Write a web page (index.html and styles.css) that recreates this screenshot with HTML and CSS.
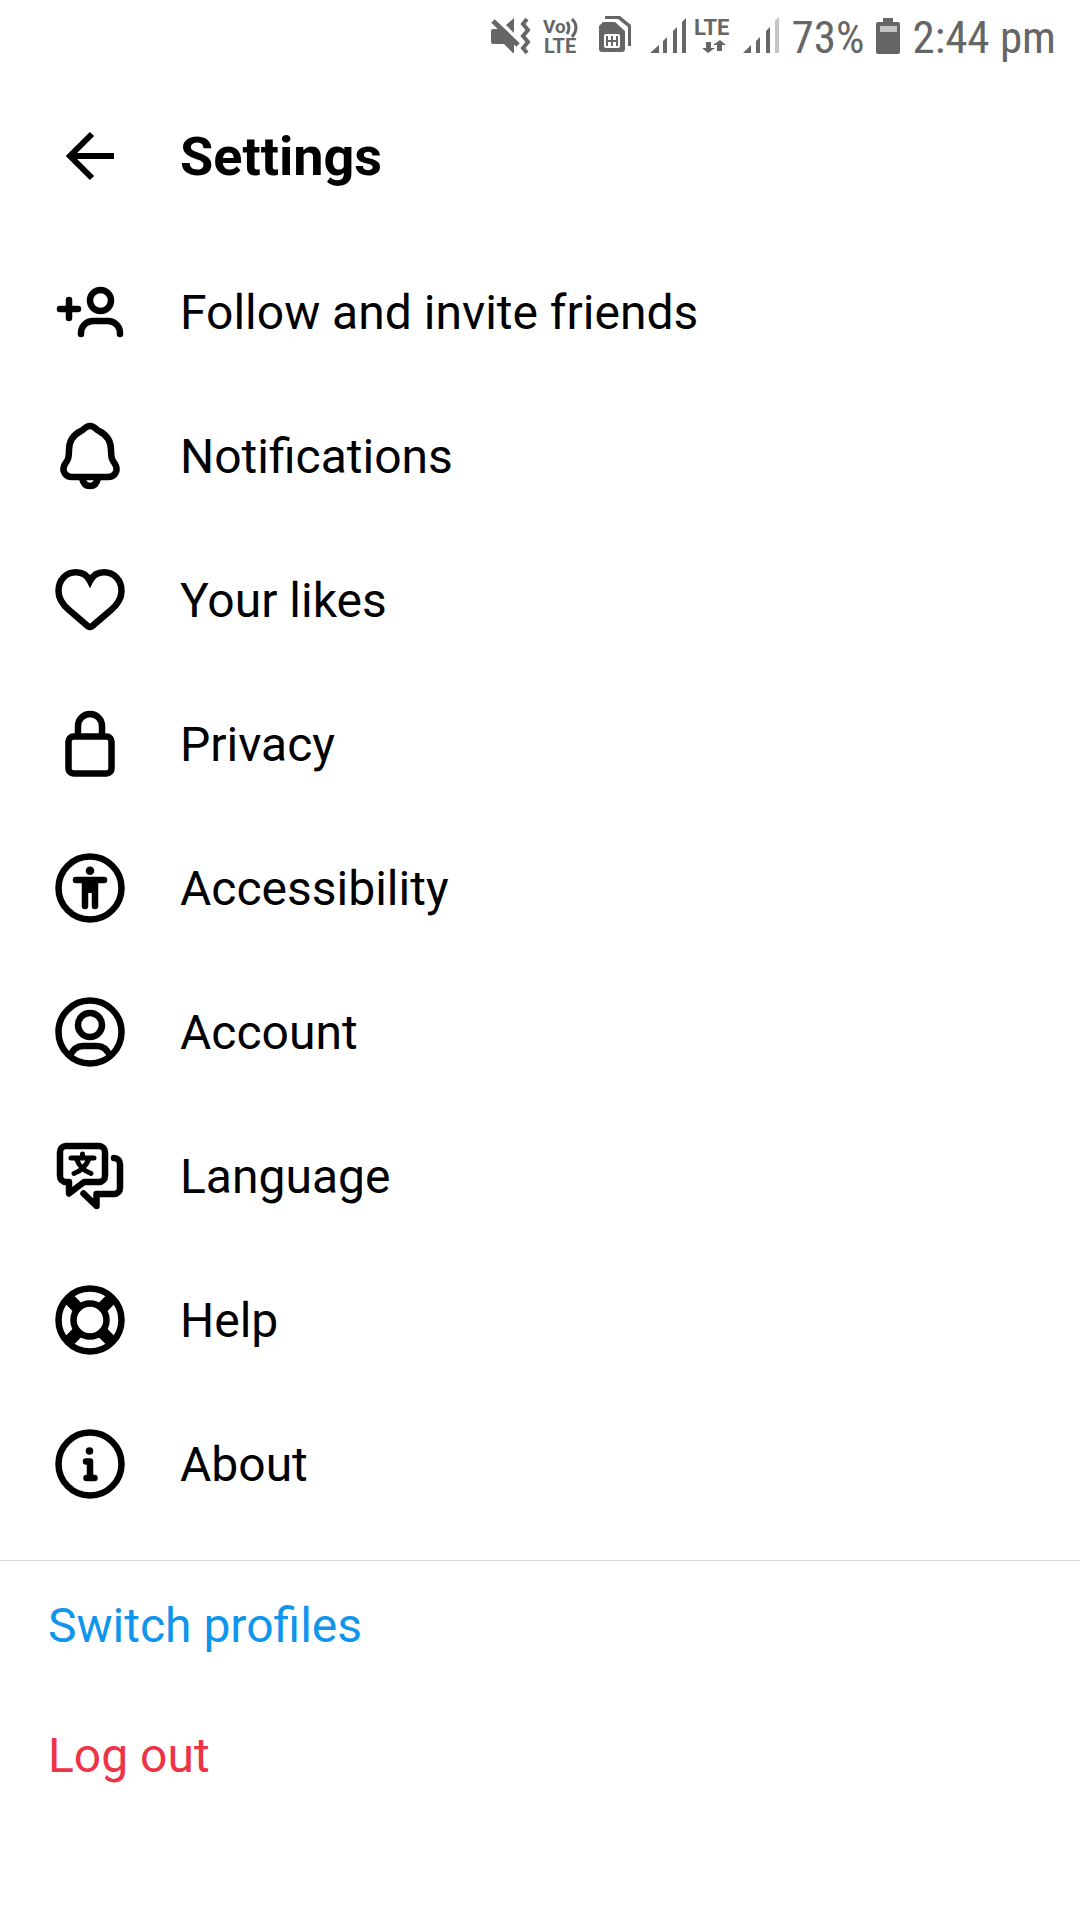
FILE: index.html
```html
<!DOCTYPE html>
<html lang="en">
<head>
<meta charset="utf-8">
<meta name="viewport" content="width=device-width, initial-scale=1">
<title>Settings</title>
<link rel="stylesheet" href="styles.css">
</head>
<body>
<div class="status-bar">
  <svg class="status-icon" width="48" height="40" viewBox="0 0 48 40" role="img" aria-label="Vibrate">
    <path d="M5 15q0-2 2-2h9l12 13v11h-1l-9-9H7q-2 0-2-2zM20 9l8-7v15z" fill="currentColor"/>
    <path d="M9 2l25 24" stroke="#fff" stroke-width="3"/>
    <path d="M7 5l25 24" stroke="currentColor" stroke-width="5"/>
    <path d="M41 3l-4 5 5 6-5 6 5 6-5 6 4 5" fill="none" stroke="currentColor" stroke-width="4"/>
  </svg>
  <svg class="status-icon" width="44" height="40" viewBox="0 0 44 40" role="img" aria-label="VoLTE">
    <text class="badge-text"><tspan x="1" y="17" font-size="19">Vo</tspan><tspan x="2" y="37" font-size="20">LTE</tspan></text>
    <path d="M25 6q4 5 0 12M30 3q8 8 0 18" fill="none" stroke="currentColor" stroke-width="3"/>
  </svg>
  <svg class="status-icon" width="48" height="40" viewBox="0 0 48 40" role="img" aria-label="SIM cards">
    <path d="M11 3V0h15L37 9v21h-3V11L24 3z" fill="currentColor"/>
    <path d="M9 6h12l10 9v18q0 3-3 3H8q-3 0-3-3V10z" fill="currentColor"/>
    <rect x="10" y="18" width="16" height="14" rx="2" fill="#fff"/>
    <path d="M13 20v10M18 20v10M23 20v10M13 25h10" stroke="currentColor" stroke-width="2"/>
  </svg>
  <svg class="status-icon" width="38" height="40" viewBox="0 0 38 40" role="img" aria-label="Signal, SIM 1">
    <path d="M0 37l9-8v8zM13 37V25l4-4v16zM23 37V15l4-4v26zM32 37V6l4-4v35z" fill="currentColor"/>
  </svg>
  <svg class="status-icon" width="38" height="40" viewBox="0 0 38 40" role="img" aria-label="LTE data">
    <text class="badge-text" x="-2" y="19" font-size="22">LTE</text>
    <path d="M10 26h5v6h4l-7 5-6-5h4zM21 35v-6h-4l7-5 6 5h-4v6z" fill="currentColor"/>
  </svg>
  <svg class="status-icon" width="38" height="40" viewBox="0 0 38 40" role="img" aria-label="Signal, SIM 2">
    <path d="M1 37l8-8v8zM14 37V25l4-4v16zM24 37V15l4-4v26z" fill="currentColor"/>
    <path d="M33 37V5l4-4v36z" fill="#c4c4c4"/>
  </svg>
  <span class="status-text battery-level">73%</span>
  <svg class="status-icon" width="32" height="40" viewBox="0 0 32 40" role="img" aria-label="Battery">
    <path d="M11 2h10v4h5q2 0 2 2v28q0 2-2 2H6q-2 0-2-2V8q0-2 2-2h5z" fill="currentColor"/>
    <path d="M8 10h17v6H8z" fill="#c4c4c4"/>
  </svg>
  <span class="status-text">2:44 pm</span>
</div>

<header class="app-bar">
  <button class="back-button" type="button" aria-label="Back">
    <svg class="icon arrow" viewBox="0 0 72 72"><path d="M38 14L16 36l22 22M16 36h44"/></svg>
  </button>
  <h1 class="title">Settings</h1>
</header>

<main>
  <nav class="menu" aria-label="Settings">
    <a class="menu-item" href="#follow">
      <svg class="icon round" viewBox="0 0 72 72"><path d="M6 33h18M15 24v18M27 58v-1a12 12 0 0 1 12-12h15a12 12 0 0 1 12 12v1"/><circle cx="46.5" cy="24.5" r="10.5"/></svg>
      <span class="label">Follow and invite friends</span>
    </a>
    <a class="menu-item" href="#notifications">
      <svg class="icon round" viewBox="0 0 72 72"><path d="M36 6C31 6 30 10 27 11C19 15 15 22 15 30C15 41 13 40 10 46C8 52 12 57 18 57H54C60 57 64 52 62 46C59 40 57 41 57 30C57 22 53 15 45 11C42 10 41 6 36 6ZM28 58C29 63 32 66 36 66S43 63 44 58"/></svg>
      <span class="label">Notifications</span>
    </a>
    <a class="menu-item" href="#likes">
      <svg class="icon" viewBox="0 0 72 72"><path d="M36 17C33 11 28 8.3 22 8.3C12 8.3 4.5 16 4.5 27C4.5 35 9 41 15 46L34 62.3Q36 63.6 38 62.3L57 46C63 41 67.5 35 67.5 27C67.5 16 60 8.3 50 8.3C44 8.3 39 11 36 17Z"/></svg>
      <span class="label">Your likes</span>
    </a>
    <a class="menu-item" href="#privacy">
      <svg class="icon" viewBox="0 0 72 72"><rect x="14.5" y="28.5" width="43" height="37" rx="5"/><path d="M24 28V18a12 12 0 0 1 24 0v10"/></svg>
      <span class="label">Privacy</span>
    </a>
    <a class="menu-item" href="#accessibility">
      <svg class="icon round" viewBox="0 0 72 72"><circle cx="36" cy="36" r="31.5"/><circle class="solid" cx="36" cy="18.7" r="4.3"/><path d="M22 28h28M31 30v24M41 30v24"/><path class="solid" d="M28 28h16v13H28z"/></svg>
      <span class="label">Accessibility</span>
    </a>
    <a class="menu-item" href="#account">
      <svg class="icon round" viewBox="0 0 72 72"><circle cx="36" cy="36" r="31.5"/><circle cx="36" cy="29" r="12"/><path d="M16 60C19 53 23 50 29 50H43C49 50 53 53 56 60"/></svg>
      <span class="label">Account</span>
    </a>
    <a class="menu-item" href="#language">
      <svg class="icon round" viewBox="0 0 72 72"><path d="M12 6h33a6 6 0 0 1 6 6v24a6 6 0 0 1-6 6H30L15 53.5V42h-3a6 6 0 0 1-6-6V12a6 6 0 0 1 6-6zM60 18a6 6 0 0 1 6 6v24a6 6 0 0 1-6 6H42.5v12L29.5 53.5"/><path class="thin" d="M17 18h23M28.5 14v4M22.500 19C25 26 30 31 37 33.500M35 19C32 26 27 31 20 33.500"/></svg>
      <span class="label">Language</span>
    </a>
    <a class="menu-item" href="#help">
      <svg class="icon" viewBox="0 0 72 72"><circle cx="36" cy="36" r="31.5"/><circle cx="36" cy="36" r="16.5"/><path class="spokes" d="M15 15l10 10M57 15L47 25M15 57l10-10M57 57L47 47"/></svg>
      <span class="label">Help</span>
    </a>
    <a class="menu-item" href="#about">
      <svg class="icon round" viewBox="0 0 72 72"><circle cx="36" cy="36" r="31.5"/><circle class="solid" cx="35.5" cy="23" r="3.8"/><path d="M32 33.500H36V50M32.500 50h8"/></svg>
      <span class="label">About</span>
    </a>
  </nav>
  <div class="account-actions">
    <button class="action switch" type="button">Switch profiles</button>
    <button class="action logout" type="button">Log out</button>
  </div>
</main>
</body>
</html>
```

FILE: styles.css
```css
* {
  box-sizing: border-box;
}

body {
  margin: 0;
  background: #fff;
  color: #000;
  font-family: Roboto, sans-serif;
  font-size: 48px;
  line-height: 60px;
}

.status-bar {
  display: flex;
  align-items: center;
  justify-content: flex-end;
  gap: 8px;
  height: 72px;
  padding-right: 24px;
  color: #666;
}

.status-icon {
  flex: none;
  overflow: visible;
}

.badge-text {
  font-weight: 700;
  fill: currentColor;
}

.status-text {
  padding-top: 4px;
  font-family: "Roboto Condensed", "Liberation Sans Narrow", Roboto, sans-serif;
  font-size: 45px;
  white-space: nowrap;
}

.battery-level {
  margin-left: 4px;
}

.app-bar {
  display: flex;
  align-items: center;
  gap: 54px;
  height: 168px;
  padding: 0 54px;
}

.back-button {
  padding: 0;
  border: 0;
  background: none;
  color: inherit;
}

.title {
  margin: 0;
  padding-top: 2px;
  font-size: 54px;
  font-weight: 700;
}

.icon {
  display: block;
  flex: none;
  width: 72px;
  height: 72px;
  fill: none;
  stroke: currentColor;
  stroke-width: 6.5;
}

.arrow {
  stroke-width: 6;
}

.round {
  stroke-linecap: round;
  stroke-linejoin: round;
}

.solid {
  fill: currentColor;
  stroke: none;
}

.thin {
  stroke-width: 5;
}

.spokes {
  stroke-width: 12;
}

.menu {
  padding-bottom: 24px;
  border-bottom: 1px solid #dbdbdb;
}

.menu-item {
  display: flex;
  align-items: center;
  gap: 54px;
  height: 144px;
  padding: 0 54px;
  color: inherit;
  text-decoration: none;
}

.label {
  padding-top: 2px;
}

.account-actions {
  display: flex;
  flex-direction: column;
}

.action {
  height: 130px;
  padding: 0 48px;
  border: 0;
  background: none;
  font: inherit;
  text-align: left;
}

.switch {
  color: #0f95ec;
}

.logout {
  color: #ed3447;
}
```
